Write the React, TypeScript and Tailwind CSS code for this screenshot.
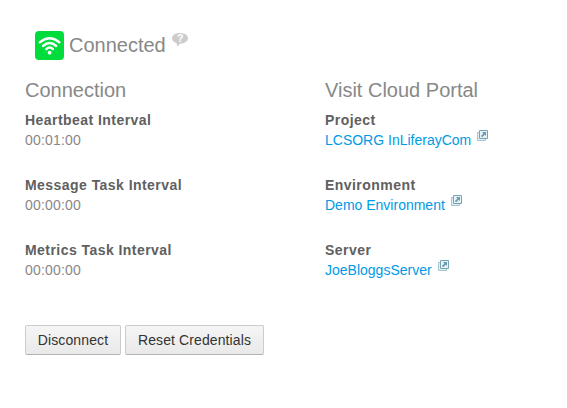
import React from "react";

function ExternalIcon() {
  return (
    <svg className="ml-[6px] shrink-0" width="11" height="11" viewBox="0 0 11 11" fill="none">
      <path d="M.5 2.5h8v8h-8z" fill="#e3eff4" stroke="#a4c4d0" />
      <path d="M2.5 .5h8v8h-8z" fill="#e8f3f7" stroke="#74a3b4" />
      <path d="M5 2h4v4L7.7 4.7 5.2 7.2 3.9 6l2.5-2.5z" fill="#6d9caf" />
    </svg>
  );
}

function Field({ label, value, link }: { label: string; value: string; link?: boolean }) {
  return (
    <div className="h-[65px]">
      <div className="font-bold tracking-[0.45px] text-[#606060]">{label}</div>
      {link ? (
        <div className="flex"><a className="text-[#009ae5]">{value}</a><ExternalIcon /></div>
      ) : (
        <div className="tracking-[0.18px]">{value}</div>
      )}
    </div>
  );
}

const button = "h-[30px] whitespace-nowrap rounded-[2px] border border-[#ccc] border-b-[#b3b3b3] bg-linear-to-b from-[#f5f5f5] to-[#e9e9e9] text-center tracking-[0.11px] text-[#333]";

export default function App() {
  return (
    <main className="h-[408px] w-[567px] overflow-hidden bg-white pl-[25px] pt-[31px] font-['Liberation_Sans',Arial,sans-serif] text-[14px] leading-5 text-[#888]">
      <div className="flex h-[49px] pl-[10px]">
        <svg width="29" height="29" viewBox="0 0 29 29" fill="none">
          <rect width="29" height="29" rx="4" fill="#00dc3c" />
          <path d="M4.8 11.3Q14.6 3.2 24.4 11.3M8 15Q14.6 9 21.2 15M11.3 18.2Q14.6 15 17.9 18.2" stroke="#fff" strokeWidth="2.4" strokeLinecap="round" />
          <circle cx="14.6" cy="21.7" r="1.9" fill="#fff" />
        </svg>
        <h1 className="ml-[5px] text-[20px] leading-[28px]">Connected</h1>
        <svg className="ml-[6px] mt-[2px]" width="16" height="14" viewBox="0 0 16 14">
          <path d="M8 0c4.5 0 8 2.2 8 5.3s-3.5 5.4-8 5.4L5.2 13.4 4.6 10.2C1.8 9.4 0 7.6 0 5.3 0 2.2 3.5 0 8 0z" fill="#ccc" />
          <text x="4.9" y="9" fontSize="10.5" fontWeight="bold" fill="#fff">?</text>
        </svg>
      </div>
      <div className="flex">
        <section className="w-[300px]">
          <h2 className="mb-[10px] text-[20px] leading-5">Connection</h2>
          <Field label="Heartbeat Interval" value="00:01:00" />
          <Field label="Message Task Interval" value="00:00:00" />
          <Field label="Metrics Task Interval" value="00:00:00" />
        </section>
        <section>
          <h2 className="mb-[10px] text-[20px] leading-5">Visit Cloud Portal</h2>
          <Field label="Project" value="LCSORG InLiferayCom" link />
          <Field label="Environment" value="Demo Environment" link />
          <Field label="Server" value="JoeBloggsServer" link />
        </section>
      </div>
      <div className="mt-5 flex gap-1">
        <button className={`${button} w-24`}>Disconnect</button>
        <button className={`${button} w-[139px]`}>Reset Credentials</button>
      </div>
    </main>
  );
}
